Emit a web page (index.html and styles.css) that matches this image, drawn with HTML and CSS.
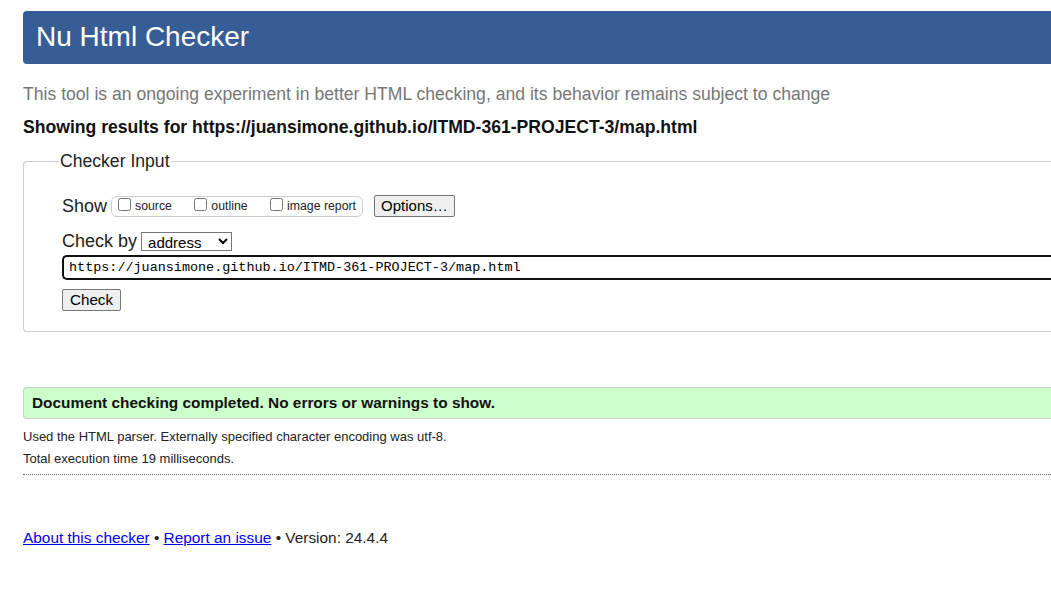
FILE: index.html
```html
<!DOCTYPE html>
<html lang="en">
<head>
<meta charset="utf-8">
<title>Nu Html Checker</title>
<link rel="stylesheet" href="styles.css">
</head>
<body>
<div class="page">
  <h1 class="banner">Nu Html Checker</h1>
  <p class="tagline">This tool is an ongoing experiment in better HTML checking, and its behavior remains subject to change</p>
  <p class="results-for">Showing results for https://juansimone.github.io/ITMD-361-PROJECT-3/map.html</p>
  <fieldset class="checker">
    <legend class="checker-legend">Checker Input</legend>
    <div class="row show-row">
      <span class="row-label">Show</span>
      <span class="show-box">
        <label class="opt"><input type="checkbox" class="cb">source</label>
        <label class="opt"><input type="checkbox" class="cb">outline</label>
        <label class="opt"><input type="checkbox" class="cb">image report</label>
      </span>
      <button class="btn options-btn" type="button">Options…</button>
    </div>
    <div class="row by-row">
      <span class="row-label">Check by</span>
      <select class="by-select"><option>address</option></select>
    </div>
    <div class="url-field">https://juansimone.github.io/ITMD-361-PROJECT-3/map.html</div>
    <div class="row">
      <button class="btn check-btn" type="button">Check</button>
    </div>
  </fieldset>
  <div class="success">Document checking completed. No errors or warnings to show.</div>
  <p class="details">Used the HTML parser. Externally specified character encoding was utf-8.</p>
  <p class="details">Total execution time 19 milliseconds.</p>
  <hr class="dotted">
  <p class="footer"><a href="#">About this checker</a> • <a href="#">Report an issue</a> • Version: 24.4.4</p>
</div>
</body>
</html>
```
FILE: styles.css
```css
html, body {
  margin: 0;
  padding: 0;
  overflow: hidden;
  background: #fff;
}
body {
  font-family: "Liberation Sans", Arial, sans-serif;
  color: #111;
}
.page {
  width: 1100px;
  padding: 11px 0 0 23px;
}
.banner {
  margin: 0;
  height: 53px;
  box-sizing: border-box;
  padding: 9px 13px 0;
  background: #365d95;
  color: #fff;
  font-size: 28px;
  font-weight: normal;
  line-height: 34px;
  border-radius: 4px 0 0 4px;
}
.tagline {
  margin: 19px 0 0;
  font-size: 17.6px;
  line-height: 22px;
  color: #777;
}
.results-for {
  margin: 11px 0 0;
  font-size: 17.6px;
  line-height: 22px;
  font-weight: bold;
  color: #111;
}
.checker {
  margin: 13px 0 0;
  padding: 22px 0 20px 38px;
  border: 1px solid #ccc;
  border-right: none;
  border-radius: 4px 0 0 4px;
  min-height: 0;
}
.checker-legend {
  padding: 0 1px;
  margin-left: -3px;
  font-size: 17.6px;
  color: #222;
}
.row {
  display: flex;
  align-items: center;
}
.row-label {
  font-size: 18px;
  color: #222;
}
.show-row {
  height: 24px;
  margin-top: 0;
}
.show-box {
  display: inline-flex;
  align-items: center;
  margin-left: 4px;
  height: 21px;
  padding: 0 6px 0 6px;
  border: 1px solid #ccc;
  border-radius: 6px;
  justify-content: space-between;
  box-sizing: border-box;
  width: 252px;
}
.opt {
  display: inline-flex;
  align-items: center;
  font-size: 12.3px;
  color: #222;
}
.cb {
  margin: 0 4px 4px 0;
  width: 13px;
  height: 13px;
}
.btn {
  font-family: "Liberation Sans", Arial, sans-serif;
  font-size: 15px;
  color: #000;
  background: #efefef;
  border: 1px solid #767676;
  border-radius: 2px;
  padding: 0 6px;
  height: 22px;
  line-height: 20px;
}
.options-btn {
  margin-left: 11px;
}
.by-row {
  margin-top: 12px;
  height: 22px;
}
.by-select {
  margin-left: 4px;
  font-family: "Liberation Sans", Arial, sans-serif;
  font-size: 15px;
  width: 91px;
  height: 19px;
  padding: 0 0 0 2px;
  border: 1px solid #767676;
  border-radius: 0;
  background: #fff;
  color: #000;
}
.url-field {
  margin-top: 3px;
  height: 25px;
  box-sizing: border-box;
  border: 2px solid #101010;
  border-right: none;
  border-radius: 5px 0 0 5px;
  padding: 0 0 0 5px;
  font-family: "Liberation Mono", "Courier New", monospace;
  font-size: 13.45px;
  line-height: 21px;
  color: #000;
}
.check-btn {
  margin-top: 9px;
  height: 22px;
  padding: 0 7px;
  font-size: 15.2px;
}
.success {
  margin-top: 55px;
  height: 32px;
  box-sizing: border-box;
  padding: 0 8px;
  background: #ccffcc;
  border: 1px solid #ccc;
  border-right: none;
  border-radius: 4px 0 0 4px;
  font-size: 15.4px;
  font-weight: bold;
  line-height: 30px;
  color: #111;
}
.details {
  margin: 11px 0 0;
  font-size: 13px;
  line-height: 14px;
  color: #222;
}
.details + .details {
  margin-top: 8px;
}
.dotted {
  margin: 8px 0 0;
  border: none;
  border-top: 1px dotted #666;
  height: 0;
}
.footer {
  margin: 54px 0 0;
  font-size: 15.4px;
  line-height: 18px;
  color: #222;
}
.footer a {
  color: #0000ee;
}
```
